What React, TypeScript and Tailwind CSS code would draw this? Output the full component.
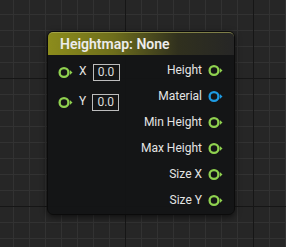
import React from 'react';

const outputs = [
  { label: 'Height', color: '#8fd14f' },
  { label: 'Material', color: '#1e9be3' },
  { label: 'Min Height', color: '#8fd14f' },
  { label: 'Max Height', color: '#8fd14f' },
  { label: 'Size X', color: '#8fd14f' },
  { label: 'Size Y', color: '#8fd14f' },
];

function Pin({ color }: { color: string }) {
  return (
    <svg width="15" height="13" viewBox="0 0 15 13" className="shrink-0">
      <circle cx="6" cy="6.5" r="4.4" fill="none" stroke={color} strokeWidth="2.3" />
      <path d="M11.8 4 L14.5 6.5 L11.8 9 Z" fill={color} />
    </svg>
  );
}

export default function App() {
  return (
    <div
      className="w-[286px] h-[247px] overflow-hidden bg-[#262626] pt-[31px] pl-[47px] font-['Roboto',sans-serif] bg-[linear-gradient(to_right,#161616_1px,transparent_1px),linear-gradient(to_bottom,#161616_1px,transparent_1px),linear-gradient(to_right,#323232_1px,transparent_1px),linear-gradient(to_bottom,#323232_1px,transparent_1px)] bg-[size:128px_128px,128px_128px,16px_16px,16px_16px] bg-[position:125px_78px,125px_78px,13px_14px,13px_14px]"
    >
      <div className="w-[188px] h-[184px] rounded-[6px] bg-[#131415]/95 border border-[#0b0b0b] shadow-[0_2px_6px_rgba(0,0,0,0.6)] flex flex-col">
        <div className="h-[23px] rounded-t-[5px] border-t border-[#b8b860]/60 bg-[linear-gradient(to_right,#8c8c1c_0%,#6e6e1c_35%,#30301e_70%,#262626_100%)] flex items-center pl-[12px]">
          <span className="text-[14px] font-semibold text-[#ececec] leading-none">Heightmap: None</span>
        </div>
        <div className="flex justify-between pt-[2px]">
          <div className="flex flex-col pl-[10px]">
            {['X', 'Y'].map((a) => (
              <div key={a} className="h-[30px] flex items-center">
                <Pin color="#8fd14f" />
                <span className="ml-[6px] text-[12px] text-[#e4e4e4] leading-none -mt-[3px]">{a}</span>
                <div className="ml-[6px] w-[27px] h-[17px] border border-[#bdbdbd] flex items-center justify-center text-[12px] text-[#dcdcdc] leading-none">
                  0.0
                </div>
              </div>
            ))}
          </div>
          <div className="flex flex-col pr-[11px] items-end">
            {outputs.map((o) => (
              <div key={o.label} className="h-[26px] flex items-center">
                <span className="text-[12px] text-[#e4e4e4] leading-none">{o.label}</span>
                <span className="ml-[6px]">
                  <Pin color={o.color} />
                </span>
              </div>
            ))}
          </div>
        </div>
      </div>
    </div>
  );
}
